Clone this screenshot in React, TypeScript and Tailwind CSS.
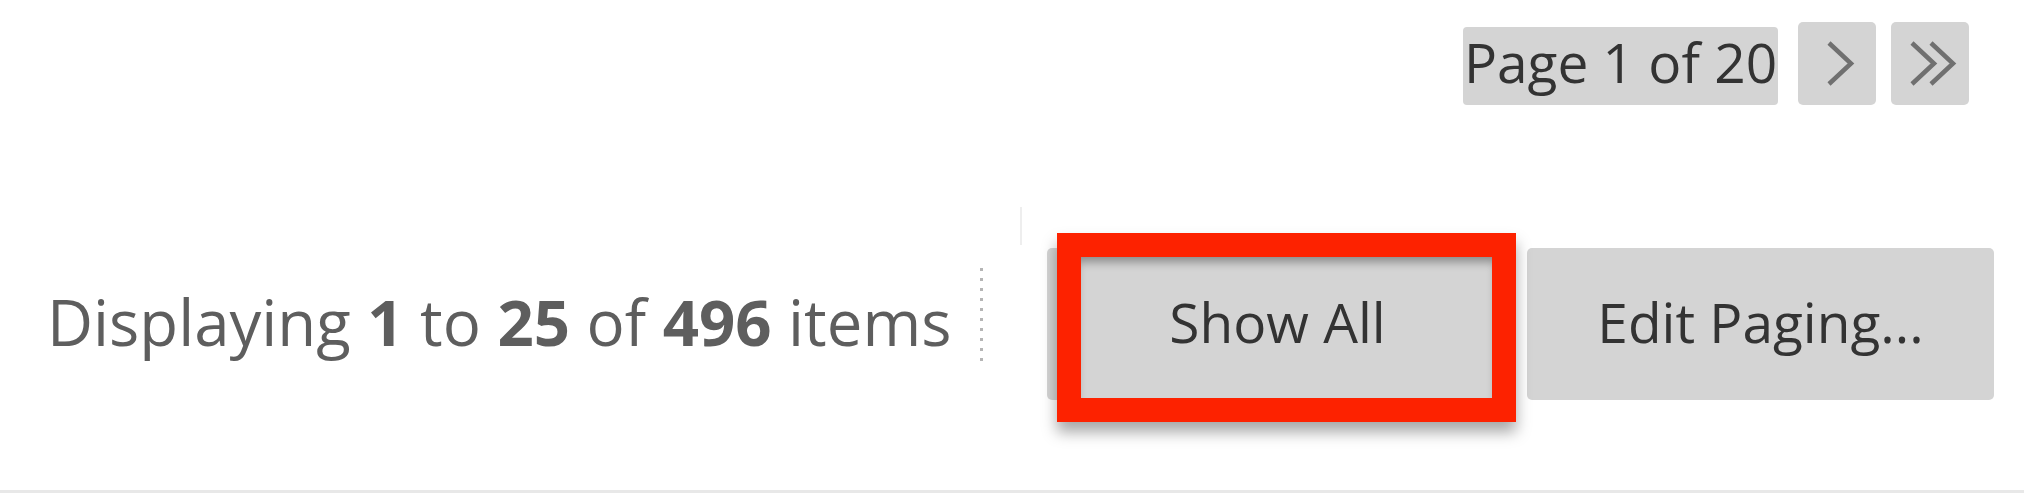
import React from 'react'

const font = { fontFamily: '"Open Sans", "Liberation Sans", sans-serif' }

function Chevron({ double }: { double?: boolean }) {
  return (
    <svg width="78" height="83" viewBox="0 0 78 83" fill="none" stroke="#707070" strokeWidth="4.5" strokeLinecap="butt" strokeLinejoin="miter">
      {double ? (
        <>
          <path d="M21 21 L43 41.5 L21 62" />
          <path d="M40 21 L62 41.5 L40 62" />
        </>
      ) : (
        <path d="M31 21 L53 41.5 L31 62" />
      )}
    </svg>
  )
}

export default function App() {
  return (
    <div className="w-full h-[493px] bg-white flex flex-col border-b-[3px] border-[#e8e8e8] overflow-hidden" style={font}>
      {/* pager */}
      <div className="flex justify-end items-start pt-[22px] pr-[55px]">
        <span className="mt-[5px] h-[78px] w-[315px] flex justify-center bg-[#d4d4d4] rounded-[4px] text-[55px] leading-[70px] text-[#333]">
          Page 1 of 20
        </span>
        <button className="ml-[20px] w-[78px] h-[83px] bg-[#d4d4d4] rounded-[5px] flex items-center justify-center">
          <Chevron />
        </button>
        <button className="ml-[15px] w-[78px] h-[83px] bg-[#d4d4d4] rounded-[5px] flex items-center justify-center">
          <Chevron double />
        </button>
      </div>

      {/* paging summary + actions */}
      <div className="flex items-start mt-[102px] pl-[47px] pr-[30px]">
        <span className="mt-[71px] text-[63.5px] leading-[87px] text-[#5e5e5e] whitespace-nowrap">
          Displaying <b className="font-bold">1</b> to <b className="font-bold">25</b> of <b className="font-bold">496</b> items
        </span>
        <div className="ml-[29px] mt-[61px] w-[3px] h-[100px] bg-[repeating-linear-gradient(to_bottom,#b5b5b5_0px,#b5b5b5_3px,transparent_3px,transparent_10px)]" />

        <div className="ml-auto flex items-start">
          <div className="w-[2px] h-[38px] bg-[#eeeeee]" />
          <div className="relative ml-[25px] mt-[41px]">
            <button className="w-[461px] h-[152px] bg-[#d4d4d4] rounded-[5px] flex items-center justify-center pb-[4px] text-[55px] text-[#333]">
              Show All
            </button>
            <div className="absolute left-[10px] top-[-15px] w-[459px] h-[189px] border-[24px] border-[#fd2200] shadow-[0_10px_14px_rgba(0,0,0,0.35),inset_0_9px_10px_-4px_rgba(0,0,0,0.35)]" />
          </div>
          <button className="ml-[19px] mt-[41px] w-[467px] h-[152px] bg-[#d4d4d4] rounded-[5px] flex items-center justify-center pb-[4px] text-[55px] text-[#333]">
            Edit Paging...
          </button>
        </div>
      </div>
    </div>
  )
}
